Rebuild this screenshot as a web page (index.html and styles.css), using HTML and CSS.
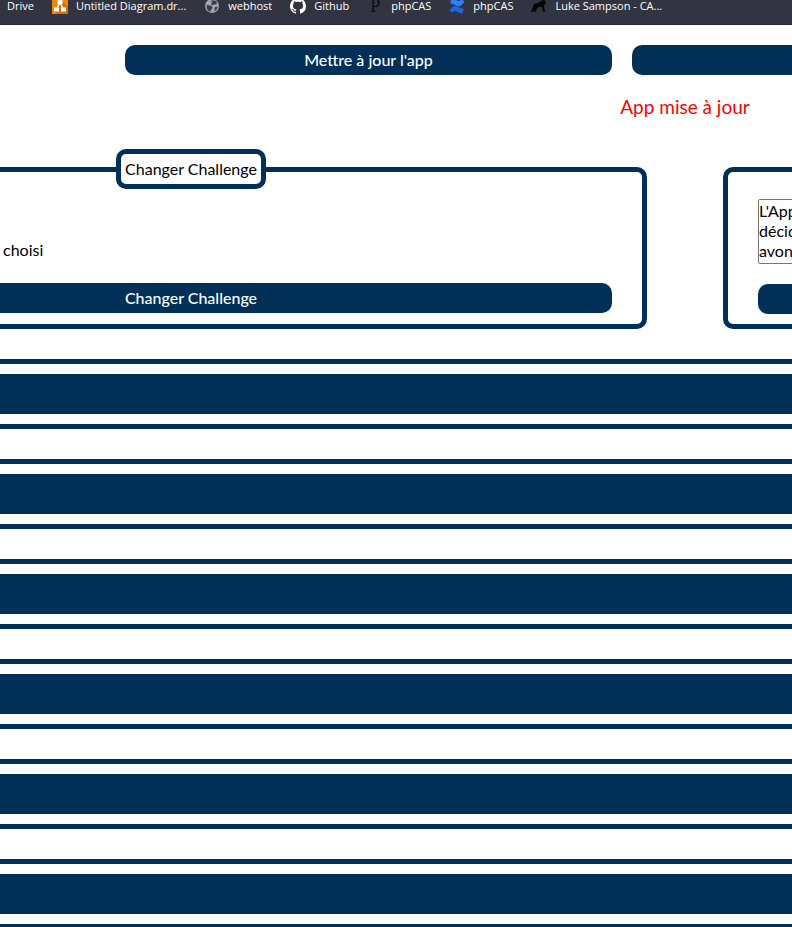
FILE: index.html
```html
<!DOCTYPE html>
<html lang="fr">
<head>
<meta charset="utf-8">
<title>Administration</title>
<link rel="stylesheet" href="styles.css">
</head>
<body>
<nav class="bookmarks">
  <a class="bookmark" href="#">Drive</a>
  <a class="bookmark" href="#">
    <svg class="icon" viewBox="0 0 16 16"><rect width="16" height="16" fill="#f08705"/><path d="M10 3l6 6v7H5l-3-3z" fill="#df6c0c"/><path d="M8 4 4.500 12M8 4l3.500 8" stroke="#fff" stroke-width="1.500"/><path d="M5.500 2h5v4h-5zM2 9.500h5v4H2zM9 9.500h5v4H9z" fill="#fff"/></svg>
    Untitled Diagram.dr...</a>
  <a class="bookmark" href="#">
    <svg class="icon" viewBox="0 0 16 16"><circle cx="8" cy="8" r="7" fill="#a3a5ab"/><path d="M2.500 7l4 .5 2 1.500-.5 2-1.500 1v2C4 13.500 2.500 11 2.500 7zM7 2.500h4l2 2-1 2H9.500l-1 1-1.500-1 1-2zM11 9l2.500-.5c0 2-1 3.500-2.500 4.500l-.5-2z" fill="#3a3c4a"/></svg>
    webhost</a>
  <a class="bookmark" href="#">
    <svg class="icon" viewBox="0 0 16 16"><path fill="#fff" d="M8 0C3.580 0 0 3.580 0 8c0 3.540 2.290 6.530 5.470 7.590.4.070.55-.17.55-.38 0-.19-.01-.82-.01-1.490-2.010.37-2.530-.49-2.690-.94-.09-.23-.48-.94-.82-1.130-.28-.15-.68-.52-.01-.53.63-.01 1.080.58 1.230.82.72 1.210 1.870.87 2.330.66.070-.52.28-.87.51-1.070-1.780-.2-3.640-.89-3.640-3.950 0-.87.31-1.590.82-2.150-.08-.2-.36-1.020.08-2.120 0 0 .67-.21 2.200.82.64-.18 1.320-.27 2-.27s1.360.09 2 .27c1.530-1.040 2.200-.82 2.200-.82.44 1.100.16 1.920.08 2.120.51.56.82 1.270.82 2.150 0 3.070-1.870 3.750-3.650 3.950.29.25.54.73.54 1.480 0 1.070-.01 1.930-.01 2.200 0 .21.15.46.55.38A8.010 8.010 0 0 0 16 8c0-4.420-3.580-8-8-8z"/></svg>
    Github</a>
  <a class="bookmark" href="#"><span class="icon letter">P</span>phpCAS</a>
  <a class="bookmark" href="#">
    <svg class="icon" viewBox="0 0 16 16"><path d="M.5 12.500C3.500 7.500 6 7.200 9 8.600l6 2.700-2.200 4.500-5.500-2.500c-1.600-.7-2.400-.3-3.600 1.500z" fill="#1c66e0"/><path d="M15.500 3.500C12.500 8.500 10 8.800 7 7.400L1 4.700 3.200.2l5.500 2.500c1.600.7 2.400.3 3.600-1.500z" fill="#2684ff"/></svg>
    phpCAS</a>
  <a class="bookmark" href="#">
    <svg class="icon" viewBox="0 0 16 16"><path d="m3 6 4-1 3-2 3-1 2 2-1 2-1 2 1 6h-2l-1-5H8l-2 1-1 4H3l1-4-2 4H0l2-5z" fill="#050506"/></svg>
    Luke Sampson - CA...</a>
</nav>

<main>
  <div class="toolbar">
    <button class="button" type="button">Mettre à jour l'app</button>
    <button class="button" type="button" aria-label="Action"></button>
  </div>

  <div class="wide">
    <p class="status">App mise à jour</p>
    <div class="cards">
      <fieldset class="card">
        <legend>Changer Challenge</legend>
        <p class="choice">choisi</p>
        <button class="button" type="button">Changer Challenge</button>
      </fieldset>
      <form class="card card-message">
        <textarea class="message" aria-label="Message">L'App
décid
avons
f</textarea>
        <button class="button" type="button" aria-label="Enregistrer"></button>
      </form>
    </div>
    <div class="rows">
      <section class="row"><div class="band"></div></section>
      <section class="row"><div class="band"></div></section>
      <section class="row"><div class="band"></div></section>
      <section class="row"><div class="band"></div></section>
      <section class="row"><div class="band"></div></section>
      <section class="row"><div class="band"></div></section>
    </div>
  </div>
</main>
</body>
</html>
```
FILE: styles.css
```css
* { box-sizing: border-box; }

:root { --navy: #003057; }

body {
  margin: 0;
  height: 100vh;
  overflow: hidden;
  background: #fff;
  color: #000;
  font: 16px/20px Lato, "Liberation Sans", sans-serif;
}

.bookmarks {
  display: flex;
  gap: 18px;
  margin-top: -2px;
  padding: 0 7px 11px;
  background: #323441;
  border-bottom: 1px solid #2b2a38;
}

.bookmark {
  display: flex;
  gap: 8px;
  align-items: center;
  height: 15px;
  color: #fff;
  font: 11px/16px "Open Sans", "Noto Sans", sans-serif;
  text-decoration: none;
  white-space: nowrap;
}

.icon {
  flex: none;
  width: 16px;
  height: 16px;
}

.letter {
  color: #0c0d11;
  font: 18px/16px "Liberation Serif", serif;
  text-align: center;
}

.toolbar {
  display: grid;
  grid-template-columns: 1fr 180px;
  gap: 20px;
  margin: 20px -20px 0 125px;
}

.button {
  display: block;
  width: 100%;
  height: 30px;
  padding: 0;
  border: 0;
  border-radius: 10px;
  background: var(--navy);
  color: #fff;
  font: inherit;
  font-weight: 500;
}

/* The content is wider than the window and is centred past its right edge. */
.wide {
  width: calc(100vw + 1108px);
  margin-left: -265px;
}

.status {
  margin: 20px 0 0;
  color: #f00;
  font-size: 19px;
  line-height: 24px;
  text-align: center;
}

.cards {
  display: grid;
  grid-template-columns: 1fr 1fr;
  gap: 76px;
  align-items: end;
  margin-top: 30px;
}

.card {
  min-width: 0;
  margin: 0;
  padding: 0 30px 11px;
  border: 5px solid var(--navy);
  border-radius: 10px;
}

.card legend {
  margin: 0 auto;
  padding: 5px 4px;
  border: 5px solid var(--navy);
  border-radius: 10px;
  background: #fff;
}

.choice {
  margin: 51px 0 23px;
  padding-left: 233px;
}

.card-message {
  padding-top: 27px;
  padding-bottom: 10px;
}

.message {
  display: block;
  width: 100%;
  height: 65px;
  margin-bottom: 20px;
  padding: 1px 0;
  border: 1px solid #767676;
  border-radius: 2px;
  background: #fff;
  color: #000;
  font: inherit;
  resize: none;
  overflow: hidden;
}

.rows {
  display: grid;
  gap: 30px;
  margin-top: 30px;
}

.row {
  padding: 10px;
  border: 5px solid var(--navy);
}

.band {
  height: 40px;
  background: var(--navy);
}
```
